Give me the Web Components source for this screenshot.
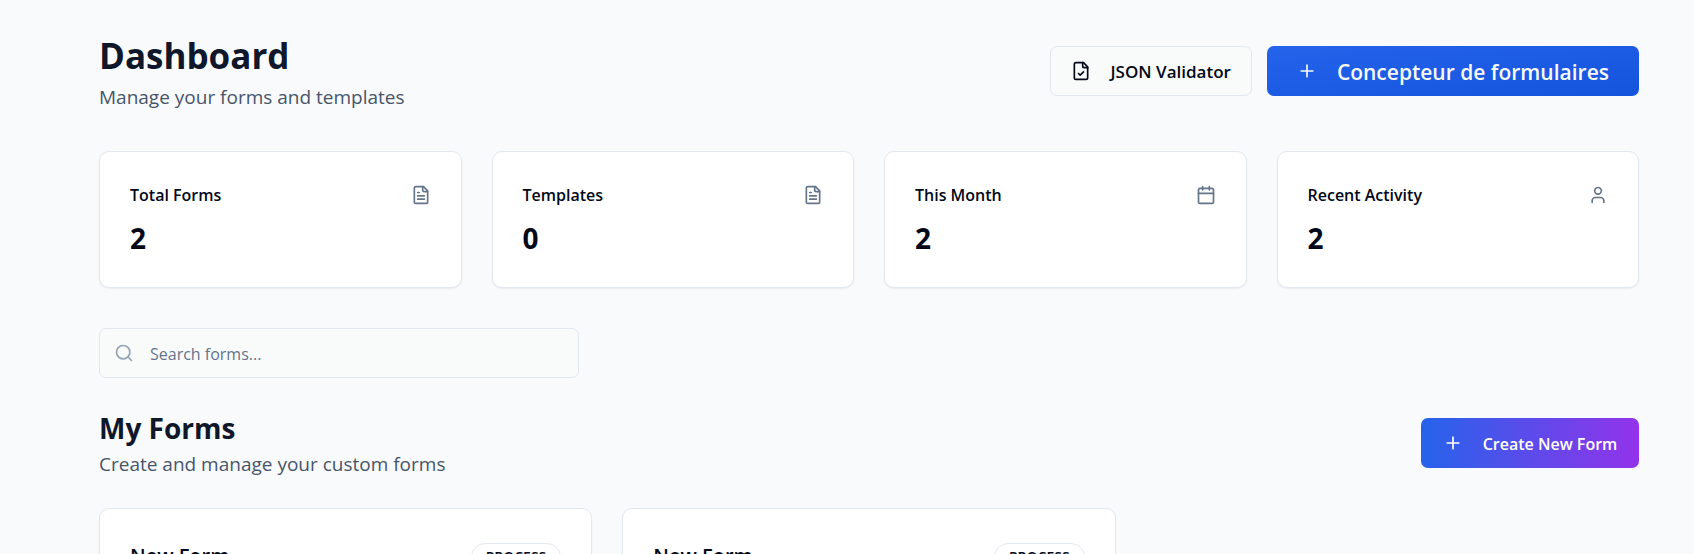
<!DOCTYPE html>
<html lang="en">
<head>
<meta charset="utf-8">
<title>Dashboard</title>
<style>
  body { margin: 0; background: #f9fafc; color: #020817; font-family: "Open Sans", "Noto Sans", sans-serif; }
</style>
</head>
<body>
<forms-dashboard></forms-dashboard>

<template id="tpl-icon">
  <style>
    :host { display: block; flex: none; width: 20px; height: 20px; }
    svg { display: block; width: 100%; height: 100%; fill: none; stroke: currentColor; stroke-width: 2; stroke-linecap: round; stroke-linejoin: round; }
  </style>
  <svg viewBox="0 0 24 24" aria-hidden="true"></svg>
</template>

<template id="tpl-button">
  <style>
    :host { display: block; }
    button { box-sizing: border-box; display: flex; align-items: center; justify-content: center; gap: 20px; height: 50px; margin: 0; padding: 0 20px; border: 0; border-radius: 7px; font: 600 17px/24px "Open Sans", "Noto Sans", sans-serif; color: #fff; white-space: nowrap; cursor: pointer; }
    span { padding-top: 2px; }
    :host([variant="outline"]) button { border: 1px solid #e2e8f0; background: #f9fbfb; color: #020817; }
    :host([variant="primary"]) button { padding: 0 30px; font-size: 21px; background: linear-gradient(to bottom right, #2563eb, #1453dc); color: #f8fafc; }
    :host([variant="gradient"]) button { min-width: 218px; font-size: 16px; background: linear-gradient(to right, #2563eb, #9333ea); }
  </style>
  <button type="button"><ui-icon></ui-icon><span><slot></slot></span></button>
</template>

<template id="tpl-heading">
  <style>
    :host { display: flex; align-items: center; justify-content: space-between; gap: 20px; }
    ::slotted([slot="title"]) { margin: 0; font-weight: 700; color: #0f172a; }
    ::slotted(h1) { font-size: 35px; line-height: 52px; }
    ::slotted(h2) { font-size: 28px; line-height: 42px; }
    p { margin: 0; font-size: 19px; line-height: 30px; color: #475569; }
    .actions { display: flex; gap: 15px; }
  </style>
  <div><slot name="title"></slot><p><slot></slot></p></div>
  <div class="actions"><slot name="action"></slot></div>
</template>

<template id="tpl-stat">
  <style>
    :host { display: block; padding: 30px 30px 28px; border: 1px solid #e2e8f0; border-radius: 10px; background: #fff; box-shadow: 0 1px 2px rgba(0, 0, 0, .06); }
    .top { display: flex; align-items: center; justify-content: space-between; margin-bottom: 9px; }
    h3 { margin: 0; font-size: 16px; font-weight: 600; line-height: 26px; }
    ui-icon { color: #64748b; }
    .value { font-size: 28px; font-weight: 700; line-height: 42px; }
  </style>
  <div class="top"><h3></h3><ui-icon></ui-icon></div>
  <div class="value"><slot></slot></div>
</template>

<template id="tpl-search">
  <style>
    :host { display: block; max-width: 480px; }
    label { box-sizing: border-box; display: flex; align-items: center; gap: 16px; height: 50px; padding: 0 14px; border: 1px solid #e2e8f0; border-radius: 7px; background: #f9fbfb; }
    ui-icon { color: #94a3b8; }
    input { flex: 1; min-width: 0; margin: 0; padding: 2px 0 0; border: 0; outline: 0; background: none; font: 400 16px/24px "Open Sans", "Noto Sans", sans-serif; color: #020817; }
    input::placeholder { color: #64748b; opacity: 1; }
  </style>
  <label><ui-icon name="search"></ui-icon><input type="text" placeholder="Search forms..." aria-label="Search forms"></label>
</template>

<template id="tpl-card">
  <style>
    :host { display: block; padding: 30px; border: 1px solid #e2e8f0; border-radius: 10px; background: #fff; box-shadow: 0 1px 2px rgba(0, 0, 0, .06); }
    .top { display: flex; align-items: center; justify-content: space-between; }
    h3 { margin: 0; padding-bottom: 2px; font-size: 20px; font-weight: 600; line-height: 34px; }
    .badge { padding: 0 14px; border: 1px solid #e2e8f0; border-radius: 14px; font-size: 14px; font-weight: 600; line-height: 26px; }
  </style>
  <div class="top"><h3><slot></slot></h3><span class="badge"></span></div>
</template>

<template id="tpl-dashboard">
  <style>
    :host { display: block; padding: 30px 55px 30px 99px; }
    .stats { display: grid; grid-template-columns: repeat(4, 1fr); gap: 30px; margin: 39px 0 40px; }
    .section { margin: 29px 0; }
    .forms { display: grid; grid-template-columns: repeat(3, 1fr); gap: 30px; }
  </style>
  <main>
    <page-heading>
      <h1 slot="title">Dashboard</h1>
      Manage your forms and templates
      <ui-button slot="action" variant="outline" icon="file-check">JSON Validator</ui-button>
      <ui-button slot="action" variant="primary" icon="plus">Concepteur de formulaires</ui-button>
    </page-heading>
    <div class="stats">
      <stat-card label="Total Forms" icon="file-text">2</stat-card>
      <stat-card label="Templates" icon="file-text">0</stat-card>
      <stat-card label="This Month" icon="calendar">2</stat-card>
      <stat-card label="Recent Activity" icon="user">2</stat-card>
    </div>
    <search-box></search-box>
    <page-heading class="section">
      <h2 slot="title">My Forms</h2>
      Create and manage your custom forms
      <ui-button slot="action" variant="gradient" icon="plus">Create New Form</ui-button>
    </page-heading>
    <div class="forms">
      <form-card badge="PROCESS">New Form</form-card>
      <form-card badge="PROCESS">New Form</form-card>
    </div>
  </main>
</template>

<script>
const FILE = '<path d="M15 2H6a2 2 0 0 0-2 2v16a2 2 0 0 0 2 2h12a2 2 0 0 0 2-2V7Z"/><path d="M14 2v4a2 2 0 0 0 2 2h4"/>';
const ICONS = {
  'file-text': FILE + '<path d="M10 9H8M16 13H8M16 17H8"/>',
  'file-check': FILE + '<path d="m9 15 2 2 4-4"/>',
  plus: '<path d="M5 12h14M12 5v14"/>',
  calendar: '<path d="M8 2v4M16 2v4M3 10h18"/><rect width="18" height="18" x="3" y="4" rx="2"/>',
  user: '<path d="M19 21v-2a4 4 0 0 0-4-4H9a4 4 0 0 0-4 4v2"/><circle cx="12" cy="7" r="4"/>',
  search: '<circle cx="11" cy="11" r="8"/><path d="m21 21-4.3-4.3"/>'
};

class Base extends HTMLElement {
  constructor() {
    super();
    this.attachShadow({ mode: 'open' })
      .append(document.getElementById(this.constructor.template).content.cloneNode(true));
  }
  find(selector) { return this.shadowRoot.querySelector(selector); }
}
class UiIcon extends Base {
  static template = 'tpl-icon';
  static observedAttributes = ['name'];
  attributeChangedCallback(attribute, previous, value) { this.find('svg').innerHTML = ICONS[value] || ''; }
}
class UiButton extends Base {
  static template = 'tpl-button';
  connectedCallback() { this.find('ui-icon').setAttribute('name', this.getAttribute('icon')); }
}
class PageHeading extends Base { static template = 'tpl-heading'; }
class StatCard extends Base {
  static template = 'tpl-stat';
  connectedCallback() {
    this.find('h3').textContent = this.getAttribute('label');
    this.find('ui-icon').setAttribute('name', this.getAttribute('icon'));
  }
}
class SearchBox extends Base { static template = 'tpl-search'; }
class FormCard extends Base {
  static template = 'tpl-card';
  connectedCallback() { this.find('.badge').textContent = this.getAttribute('badge'); }
}
class FormsDashboard extends Base { static template = 'tpl-dashboard'; }

customElements.define('ui-icon', UiIcon);
customElements.define('ui-button', UiButton);
customElements.define('page-heading', PageHeading);
customElements.define('stat-card', StatCard);
customElements.define('search-box', SearchBox);
customElements.define('form-card', FormCard);
customElements.define('forms-dashboard', FormsDashboard);
</script>
</body>
</html>
